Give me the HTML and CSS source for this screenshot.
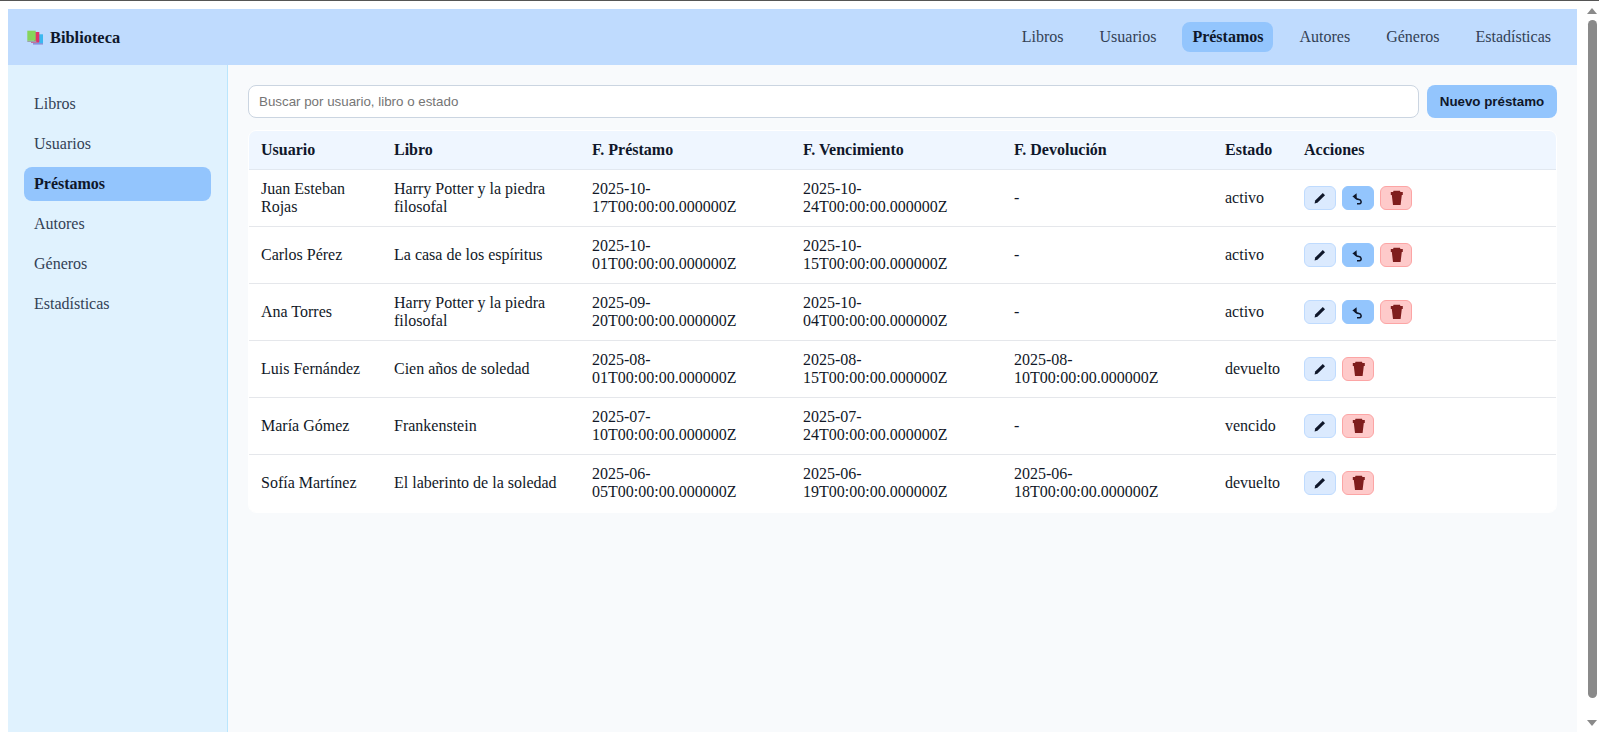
FILE: index.html
```html
<!DOCTYPE html>
<html lang="es">
<head>
    <meta charset="UTF-8" />
    <title>Biblioteca</title>
    <link rel="stylesheet" href="styles.css">
</head>
<body>

<div class="window-line"></div>

<div class="window">
    <div class="page">
        <header class="topbar">
            <div class="brand">
                <svg class="brand-icon" width="18" height="16" viewBox="0 0 18 16">
                    <rect x="7" y="14" width="10" height="1.6" fill="#8f8fd8" />
                    <rect x="11" y="5.3" width="6" height="9" fill="#3cb8f0" />
                    <rect x="5" y="12.4" width="8" height="1.5" fill="#c06a96" />
                    <rect x="8" y="3" width="5.3" height="10" fill="#e0336b" />
                    <rect x="1.3" y="11.6" width="9" height="1.4" fill="#9aa4a8" />
                    <rect x="1.3" y="1.7" width="8.4" height="10" fill="#86d45c" />
                </svg>
                <span class="brand-name">Biblioteca</span>
            </div>
            <nav class="topnav">
                <a>Libros</a>
                <a>Usuarios</a>
                <a class="active">Préstamos</a>
                <a>Autores</a>
                <a>Géneros</a>
                <a>Estadísticas</a>
            </nav>
        </header>

        <div class="layout">
            <aside class="sidebar">
                <a>Libros</a>
                <a>Usuarios</a>
                <a class="active">Préstamos</a>
                <a>Autores</a>
                <a>Géneros</a>
                <a>Estadísticas</a>
            </aside>

            <main class="content">
                <div class="toolbar">
                    <input class="search" type="text" placeholder="Buscar por usuario, libro o estado" />
                    <button class="new-btn" type="button">Nuevo préstamo</button>
                </div>

                <div class="table-wrap">
                <table class="loans">
                    <colgroup>
                        <col class="c-user"><col class="c-book"><col class="c-date"><col class="c-date"><col class="c-date"><col class="c-state"><col>
                    </colgroup>
                    <thead>
                        <tr>
                            <th>Usuario</th>
                            <th>Libro</th>
                            <th>F. Préstamo</th>
                            <th>F. Vencimiento</th>
                            <th>F. Devolución</th>
                            <th>Estado</th>
                            <th>Acciones</th>
                        </tr>
                    </thead>
                    <tbody>
                        <tr>
                            <td>Juan Esteban Rojas</td>
                            <td>Harry Potter y la piedra filosofal</td>
                            <td>2025-10-<br>17T00:00:00.000000Z</td>
                            <td>2025-10-<br>24T00:00:00.000000Z</td>
                            <td>-</td>
                            <td>activo</td>
                            <td>
                                <div class="actions">
                                    <button class="act edit"><svg viewBox="0 0 16 16"><use href="#i-edit"/></svg></button>
                                    <button class="act back"><svg viewBox="0 0 16 16"><use href="#i-back"/></svg></button>
                                    <button class="act del"><svg viewBox="0 0 16 16"><use href="#i-del"/></svg></button>
                                </div>
                            </td>
                        </tr>
                        <tr>
                            <td>Carlos Pérez</td>
                            <td>La casa de los espíritus</td>
                            <td>2025-10-<br>01T00:00:00.000000Z</td>
                            <td>2025-10-<br>15T00:00:00.000000Z</td>
                            <td>-</td>
                            <td>activo</td>
                            <td>
                                <div class="actions">
                                    <button class="act edit"><svg viewBox="0 0 16 16"><use href="#i-edit"/></svg></button>
                                    <button class="act back"><svg viewBox="0 0 16 16"><use href="#i-back"/></svg></button>
                                    <button class="act del"><svg viewBox="0 0 16 16"><use href="#i-del"/></svg></button>
                                </div>
                            </td>
                        </tr>
                        <tr>
                            <td>Ana Torres</td>
                            <td>Harry Potter y la piedra filosofal</td>
                            <td>2025-09-<br>20T00:00:00.000000Z</td>
                            <td>2025-10-<br>04T00:00:00.000000Z</td>
                            <td>-</td>
                            <td>activo</td>
                            <td>
                                <div class="actions">
                                    <button class="act edit"><svg viewBox="0 0 16 16"><use href="#i-edit"/></svg></button>
                                    <button class="act back"><svg viewBox="0 0 16 16"><use href="#i-back"/></svg></button>
                                    <button class="act del"><svg viewBox="0 0 16 16"><use href="#i-del"/></svg></button>
                                </div>
                            </td>
                        </tr>
                        <tr>
                            <td>Luis Fernández</td>
                            <td>Cien años de soledad</td>
                            <td>2025-08-<br>01T00:00:00.000000Z</td>
                            <td>2025-08-<br>15T00:00:00.000000Z</td>
                            <td>2025-08-<br>10T00:00:00.000000Z</td>
                            <td>devuelto</td>
                            <td>
                                <div class="actions">
                                    <button class="act edit"><svg viewBox="0 0 16 16"><use href="#i-edit"/></svg></button>
                                    <button class="act del"><svg viewBox="0 0 16 16"><use href="#i-del"/></svg></button>
                                </div>
                            </td>
                        </tr>
                        <tr>
                            <td>María Gómez</td>
                            <td>Frankenstein</td>
                            <td>2025-07-<br>10T00:00:00.000000Z</td>
                            <td>2025-07-<br>24T00:00:00.000000Z</td>
                            <td>-</td>
                            <td>vencido</td>
                            <td>
                                <div class="actions">
                                    <button class="act edit"><svg viewBox="0 0 16 16"><use href="#i-edit"/></svg></button>
                                    <button class="act del"><svg viewBox="0 0 16 16"><use href="#i-del"/></svg></button>
                                </div>
                            </td>
                        </tr>
                        <tr>
                            <td>Sofía Martínez</td>
                            <td>El laberinto de la soledad</td>
                            <td>2025-06-<br>05T00:00:00.000000Z</td>
                            <td>2025-06-<br>19T00:00:00.000000Z</td>
                            <td>2025-06-<br>18T00:00:00.000000Z</td>
                            <td>devuelto</td>
                            <td>
                                <div class="actions">
                                    <button class="act edit"><svg viewBox="0 0 16 16"><use href="#i-edit"/></svg></button>
                                    <button class="act del"><svg viewBox="0 0 16 16"><use href="#i-del"/></svg></button>
                                </div>
                            </td>
                        </tr>
                    </tbody>
                </table>
                </div>
            </main>
        </div>
    </div>

    <div class="scrollbar">
        <span class="arrow up"></span>
        <span class="thumb"></span>
        <span class="arrow down"></span>
    </div>
</div>

<svg class="defs" width="0" height="0">
    <symbol id="i-edit" viewBox="0 0 16 16">
        <path d="M2.6 13.4 L3.2 10.6 L10.8 3 L13 5.2 L5.4 12.8 Z" fill="#0f172a" />
    </symbol>
    <symbol id="i-back" viewBox="0 0 16 16">
        <path d="M6.6 3.2 L2.4 6.6 L6.8 9.4 Z" fill="#0f172a" />
        <path d="M5 7 C5.5 9 7 9.3 9 9.5 C11.5 9.8 12 13.5 9.5 13.7 L7 13.7" fill="none" stroke="#0f172a" stroke-width="1.5" />
    </symbol>
    <symbol id="i-del" viewBox="0 0 16 16">
        <path d="M5.5 0.8 H12 L12.4 2 H14.8 V5 H2.8 V2 H5.1 Z M3.8 5 H13.8 L12.6 15 H5 Z" fill="#7f1d1d" />
    </symbol>
</svg>

</body>
</html>
```

FILE: styles.css
```css
html, body {
    margin: 0;
    height: 100%;
    overflow: hidden;
}
body {
    font-family: "Liberation Serif", serif;
    font-size: 16px;
    color: #111827;
    background-color: #fff;
}
.defs {
    display: block;
}
.window-line {
    height: 1px;
    background-color: #555;
}
.window {
    display: flex;
    height: 731px;
}
.page {
    width: 1569px;
    margin: 8px 0 0 8px;
    display: flex;
    flex-direction: column;
}
.topbar {
    height: 56px;
    flex: none;
    display: flex;
    align-items: center;
    justify-content: space-between;
    padding: 0 16px 0 18px;
    background-color: #bfdbfe;
}
.brand {
    display: flex;
    align-items: center;
    gap: 6px;
    font-weight: bold;
    font-size: 16.4px;
    color: #0f172a;
}
.brand-name {
    padding-top: 2px;
}
.topnav {
    display: flex;
    gap: 16px;
}
.topnav a {
    padding: 6px 10px;
    border-radius: 8px;
    color: #334155;
}
.topnav a.active {
    background-color: #93c5fd;
    color: #0f172a;
    font-weight: bold;
}
.layout {
    flex: 1;
    display: flex;
    min-height: 0;
}
.sidebar {
    width: 220px;
    flex: none;
    box-sizing: border-box;
    padding: 22px 16px;
    display: flex;
    flex-direction: column;
    gap: 6px;
    background-color: #e0f2fe;
    border-right: 1px solid #bae6fd;
}
.sidebar a {
    height: 34px;
    line-height: 34px;
    padding: 0 10px;
    border-radius: 8px;
    color: #334155;
}
.sidebar a.active {
    background-color: #93c5fd;
    color: #0f172a;
    font-weight: bold;
}
.content {
    flex: 1;
    padding: 20px;
    background-color: #f8fafc;
}
.toolbar {
    display: flex;
    gap: 8px;
    margin-bottom: 12px;
}
.search {
    flex: 1;
    height: 33px;
    box-sizing: border-box;
    padding: 0 10px;
    border: 1px solid #cbd5e1;
    border-radius: 8px;
    font-family: "Liberation Sans", sans-serif;
    font-size: 13.33px;
    background-color: #fff;
}
.new-btn {
    height: 33px;
    width: 130px;
    border: none;
    border-radius: 8px;
    background-color: #93c5fd;
    color: #0f172a;
    font-family: "Liberation Sans", sans-serif;
    font-size: 13.33px;
    font-weight: bold;
}
.table-wrap {
    border: 1px solid #fff;
    border-radius: 8px;
    overflow: hidden;
}
.loans {
    width: 100%;
    table-layout: fixed;
    border-collapse: collapse;
    background-color: #fff;
}
.c-user { width: 133px; }
.c-book { width: 198px; }
.c-date { width: 211px; }
.c-state { width: 79px; }
.loans th {
    height: 38px;
    padding: 0 12px;
    text-align: left;
    background-color: #eff6ff;
    border-bottom: 1px solid #e2e8f0;
    color: #0f172a;
}
.loans td {
    height: 36px;
    padding: 10px 12px;
    line-height: 18px;
    border-bottom: 1px solid #e5e7eb;
}
.loans tbody tr:last-child td {
    border-bottom-color: transparent;
}
.actions {
    display: flex;
    gap: 6px;
}
.act {
    width: 32px;
    height: 24px;
    padding: 0;
    box-sizing: border-box;
    display: flex;
    align-items: center;
    justify-content: center;
    border-radius: 6px;
    border: 1px solid;
}
.act svg {
    width: 16px;
    height: 16px;
}
.edit {
    background-color: #dbeafe;
    border-color: #bfdbfe;
}
.back {
    background-color: #93c5fd;
    border-color: #93c5fd;
}
.del {
    background-color: #fecaca;
    border-color: #fca5a5;
}
.scrollbar {
    flex: 1;
    display: flex;
    flex-direction: column;
    align-items: flex-end;
    padding: 7px 2px 4px 0;
    box-sizing: border-box;
}
.thumb {
    width: 9px;
    height: 678px;
    margin: 6px 0 22px;
    border-radius: 5px;
    background-color: #8a8a8a;
}
.arrow {
    width: 0;
    height: 0;
    border-left: 5px solid transparent;
    border-right: 5px solid transparent;
}
.arrow.up {
    border-bottom: 6px solid #8a8a8a;
}
.arrow.down {
    border-top: 6px solid #8a8a8a;
}
```
